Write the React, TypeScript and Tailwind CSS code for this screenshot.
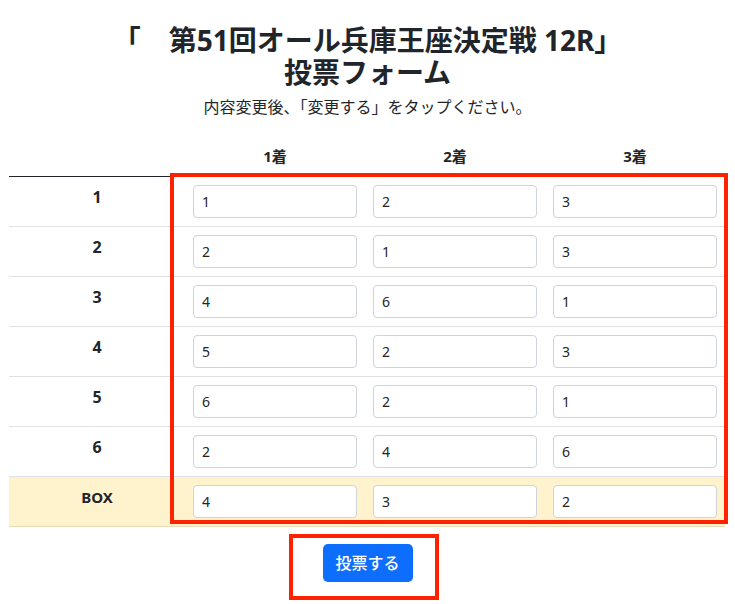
import React from "react";

const rows = [
  { label: "1", values: ["1", "2", "3"] },
  { label: "2", values: ["2", "1", "3"] },
  { label: "3", values: ["4", "6", "1"] },
  { label: "4", values: ["5", "2", "3"] },
  { label: "5", values: ["6", "2", "1"] },
  { label: "6", values: ["2", "4", "6"] },
];

const boxRow = { label: "BOX", values: ["4", "3", "2"] };

const font = { fontFamily: '"Noto Sans", "Noto Sans CJK JP", sans-serif' };

const Cell = ({ value }: { value: string }) => (
  <div className="px-2 pt-2 pb-2">
    <input
      defaultValue={value}
      className="w-[164px] h-[33px] rounded-[4px] border border-[#ced4da] bg-white px-[8px] text-[14px] text-[#212529] outline-none"
    />
  </div>
);

const App = () => {
  return (
    <div className="min-h-[604px] w-[735px] bg-white text-[#212529]" style={font}>
      <div className="pt-[24px] text-center">
        <h3 className="text-[28px] font-bold leading-[32px]">
          「　第51回オール兵庫王座決定戦 12R」
          <br />
          投票フォーム
        </h3>
        <p className="mt-[8px] text-[16px] leading-[22px]">
          内容変更後、「変更する」をタップください。
        </p>
      </div>

      <div className="relative mx-[9px] mt-[18px] w-[716px]">
        <div className="grid grid-cols-[176px_180px_180px_180px] border-b border-[#212529] h-[41px] items-center text-[15px] font-bold">
          <div />
          <div className="text-center">1着</div>
          <div className="text-center">2着</div>
          <div className="text-center">3着</div>
        </div>

        {rows.map((row) => (
          <div
            key={row.label}
            className="grid grid-cols-[176px_180px_180px_180px] border-b border-[#dee2e6]"
          >
            <div className="pt-[8px] text-center text-[16px] font-bold leading-[24px]">
              {row.label}
            </div>
            {row.values.map((v, i) => (
              <Cell key={i} value={v} />
            ))}
          </div>
        ))}

        <div className="grid grid-cols-[176px_180px_180px_180px] border-b border-[#e6dbb9] bg-[#fff3cd]">
          <div className="pt-[8px] text-center text-[15px] font-bold leading-[24px]">
            {boxRow.label}
          </div>
          {boxRow.values.map((v, i) => (
            <Cell key={i} value={v} />
          ))}
        </div>

        <div className="pointer-events-none absolute left-[161px] top-[37px] h-[351px] w-[558px] border-4 border-[#ff2200]" />
      </div>

      <div className="mt-[17px] flex justify-center">
        <div className="relative">
          <button className="h-[38px] w-[90px] rounded-[5px] bg-[#0d6efd] text-[16px] font-medium text-white">
            投票する
          </button>
          <div className="pointer-events-none absolute -left-[34px] -top-[10px] h-[66px] w-[150px] border-4 border-[#ff2200]" />
        </div>
      </div>
    </div>
  );
};

export default App;
